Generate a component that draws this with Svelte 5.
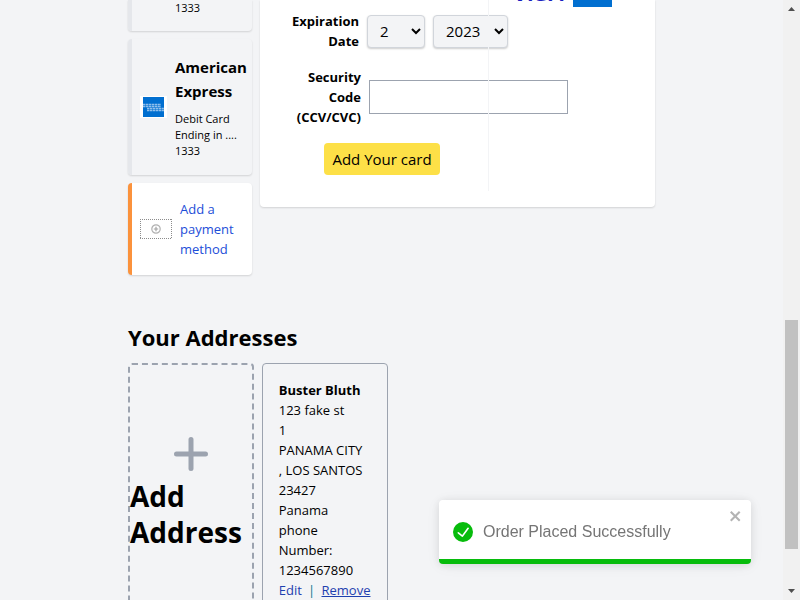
<script>
  let month = $state('2');
  let year = $state('2023');
  let code = $state('');
  let toastOpen = $state(true);
  const addressLines = [
    '123 fake st',
    '1',
    'PANAMA CITY',
    ', LOS SANTOS',
    '23427',
    'Panama',
    'phone',
    'Number:',
    '1234567890'
  ];
</script>

<div class="page">
  <main>
    <section class="wallet">
      <div class="cards">
        <article class="card">
          <div class="details"><p>1333</p></div>
        </article>
        <article class="card">
          <svg class="amex" viewBox="0 0 27 22" aria-hidden="true">
            <rect width="27" height="22" fill="#fff" />
            <rect x="3" y="1" width="21" height="20" fill="#016fd0" />
            <path d="M3 8.5h18M3 10.5h18" stroke="#8fbfec" stroke-width="1.4" stroke-dasharray="2.4 .5" />
            <path d="M7 12.5h17M7 14.5h17" stroke="#8fbfec" stroke-width="1.4" stroke-dasharray="2.4 .5" />
          </svg>
          <div class="details">
            <h3>American Express</h3>
            <p>Debit Card</p>
            <p>Ending in ....</p>
            <p>1333</p>
          </div>
        </article>
        <a class="card add" href="#payment">
          <svg class="slot" viewBox="0 0 32 20" aria-hidden="true">
            <path d="M0 .5h32M0 19.5h32M.5 0v20M31.5 0v20" fill="none" stroke="#8c8c8c" stroke-dasharray="1 1" />
            <circle cx="16" cy="10" r="4.2" fill="none" stroke="#b0b0b0" stroke-width="1.2" />
            <path d="M13.8 10h4.4M16 7.8v4.4" stroke="#a3a3a3" stroke-width="1.2" />
          </svg>
          <span>Add a payment method</span>
        </a>
      </div>

      <form class="panel" id="payment" onsubmit={(e) => e.preventDefault()}>
        <div class="brands">
          <span class="visa">VISA</span>
          <span class="blue"></span>
        </div>
        <div class="row">
          <label class="short" for="month">Expiration Date</label>
          <select id="month" class="month" bind:value={month}>
            <option>2</option>
          </select>
          <select class="year" aria-label="Year" bind:value={year}>
            <option>2023</option>
          </select>
        </div>
        <div class="row">
          <label class="long" for="code">Security Code (CCV/CVC)</label>
          <input id="code" type="text" bind:value={code} />
        </div>
        <button class="submit" type="submit">Add Your card</button>
        <div class="divider"></div>
      </form>
    </section>

    <h2>Your Addresses</h2>
    <section class="addresses">
      <a class="new" href="#address">
        <svg viewBox="0 0 48 48" aria-hidden="true">
          <path d="M24 9.5v29M9.5 24h29" stroke="#9ca3af" stroke-width="5" stroke-linecap="round" />
        </svg>
        <span>Add Address</span>
      </a>
      <address>
        <strong>Buster Bluth</strong>
        {#each addressLines as line}
          <span>{line}</span>
        {/each}
        <div class="actions">
          <a href="#edit">Edit</a><i>|</i><a class="remove" href="#remove">Remove</a>
        </div>
      </address>
    </section>
  </main>

  <div class="scrollbar" aria-hidden="true">
    <svg viewBox="0 0 7 4"><path d="M0 4L3.5 0L7 4z" fill="#505050" /></svg>
    <div class="thumb"></div>
    <svg viewBox="0 0 7 4"><path d="M0 0L3.5 4L7 0z" fill="#505050" /></svg>
  </div>

  {#if toastOpen}
    <div class="toast" role="alert">
      <svg class="check" viewBox="0 0 24 24" aria-hidden="true">
        <path fill="#07bc0c" d="M12 0a12 12 0 1012 12A12.014 12.014 0 0012 0zm6.927 8.2l-6.845 9.289a1.011 1.011 0 01-1.43.188l-4.888-3.908a1 1 0 111.25-1.562l4.076 3.261 6.227-8.451a1 1 0 111.61 1.183z" />
      </svg>
      <span>Order Placed Successfully</span>
      <button class="close" type="button" aria-label="close" onclick={() => (toastOpen = false)}>
        <svg viewBox="0 0 14 16" aria-hidden="true">
          <path fill-rule="evenodd" d="M7.71 8.23l3.75 3.75-1.48 1.48-3.75-3.75-3.75 3.75L1 11.98l3.75-3.75L1 4.48 2.48 3l3.75 3.75L9.98 3l1.48 1.48-3.75 3.75z" />
        </svg>
      </button>
    </div>
  {/if}
</div>

<style>
  :global(body) {
    margin: 0;
  }
  .page,
  .page * {
    box-sizing: border-box;
  }
  .page {
    display: flex;
    height: 100vh;
    overflow: hidden;
    background: #f3f4f6;
    color: #000;
    font: 13px/20px 'Segoe UI', 'Open Sans', 'Noto Sans', sans-serif;
  }
  h2,
  h3,
  p {
    margin: 0;
  }
  a {
    color: #1e40af;
    text-decoration: none;
  }
  main {
    flex: 1;
    padding: 0 128px;
  }
  .wallet {
    display: grid;
    grid-template-columns: 124px 1fr;
    gap: 8px;
    align-items: start;
  }
  .cards {
    display: flex;
    flex-direction: column;
    gap: 8px;
  }
  .card {
    display: flex;
    align-items: center;
    gap: 8px;
    padding: 16px 0 16px 8px;
    border-left: 4px solid #e5e7eb;
    border-radius: 4px;
    box-shadow: 0 1px 2px rgba(0, 0, 0, 0.14);
  }
  .card:first-child {
    padding: 0 0 16px 43px;
    border-radius: 0 0 4px 4px;
  }
  .details p {
    font-size: 11px;
    line-height: 16px;
  }
  .card:first-child p {
    line-height: 15px;
  }
  h3 {
    margin-bottom: 8px;
    font-size: 15px;
    line-height: 24px;
  }
  .amex {
    flex: none;
    width: 27px;
    height: 22px;
  }
  .slot {
    flex: none;
    width: 32px;
    height: 20px;
  }
  .add {
    padding-right: 8px;
    border-left-color: #fb923c;
    background: #fff;
    color: #1d4ed8;
  }
  .panel {
    position: relative;
    padding: 0 32px 32px;
    border-radius: 0 0 4px 4px;
    background: #fff;
    box-shadow: 0 1px 2px rgba(0, 0, 0, 0.14);
  }
  .brands {
    display: flex;
    gap: 8px;
    align-items: flex-start;
    height: 7px;
    margin: 0 11px 4px 0;
    overflow: hidden;
    justify-content: flex-end;
  }
  .visa {
    margin-top: -18px;
    color: #1a1fc0;
    font: italic bold 22px/24px 'Liberation Sans', sans-serif;
  }
  .blue {
    width: 39px;
    height: 7px;
    background: #016fd0;
  }
  .row {
    display: flex;
    align-items: center;
    gap: 8px;
    margin-bottom: 16px;
  }
  label {
    flex: none;
    font-weight: 700;
    text-align: right;
  }
  .short {
    width: 67px;
  }
  .long {
    width: 69px;
  }
  select {
    height: 33px;
    padding: 0 0 0 8px;
    border: 1px solid #d1d5db;
    border-radius: 4px;
    background-color: #f3f4f6;
    box-shadow: 0 1px 2px rgba(0, 0, 0, 0.2);
    color: #000;
    font: inherit;
    font-size: 15px;
  }
  .month {
    width: 58px;
  }
  .year {
    width: 75px;
  }
  input {
    width: 199px;
    height: 34px;
    padding: 0 8px;
    border: 1px solid #9ca3af;
    background: #fff;
    font: inherit;
  }
  .submit {
    display: block;
    width: 116px;
    height: 32px;
    margin-left: 32px;
    padding: 0 8px;
    border: 0;
    border-radius: 4px;
    background: #fde047;
    color: #000;
    font: inherit;
    font-size: 15px;
  }
  .divider {
    position: absolute;
    top: 0;
    bottom: 16px;
    left: 228px;
    width: 1px;
    background: #f3f4f6;
  }
  h2 {
    margin: 46px 0 10px;
    font-size: 22px;
    line-height: 32px;
  }
  .addresses {
    display: grid;
    grid-template-columns: repeat(4, minmax(0, 1fr));
    gap: 8px;
  }
  .new {
    display: flex;
    flex-direction: column;
    align-items: center;
    justify-content: center;
    border: 2px dashed #9ca3af;
    border-radius: 4px;
    color: #000;
    font-size: 28px;
    font-weight: 700;
    line-height: 36px;
  }
  .new svg {
    width: 48px;
    height: 48px;
  }
  .new span {
    width: 100%;
  }
  address {
    display: flex;
    flex-direction: column;
    padding: 16px;
    border: 1px solid #9ca3af;
    border-radius: 4px;
    font-style: normal;
    white-space: nowrap;
  }
  .actions {
    display: flex;
    justify-content: space-between;
  }
  .actions i {
    color: #0e7490;
    font-style: normal;
  }
  .remove {
    text-decoration: underline;
  }
  .scrollbar {
    display: flex;
    flex: none;
    flex-direction: column;
    align-items: center;
    justify-content: space-between;
    width: 17px;
    padding: 7px 0;
    background: #f1f1f1;
  }
  .scrollbar svg {
    width: 7px;
    height: 4px;
  }
  .thumb {
    width: 13px;
    height: 39%;
    margin: auto 0 40px;
    background: #c1c1c1;
  }
  .toast {
    position: fixed;
    right: 49px;
    bottom: 36px;
    display: flex;
    align-items: center;
    gap: 10px;
    width: 312px;
    height: 64px;
    padding: 5px 14px 0;
    border-bottom: 5px solid #07bc0c;
    border-radius: 4px;
    background: #fff;
    box-shadow: 0 1px 10px rgba(0, 0, 0, 0.1), 0 2px 15px rgba(0, 0, 0, 0.05);
    color: #757575;
    font: 16px/24px 'Liberation Sans', Arial, sans-serif;
  }
  .check {
    width: 20px;
    height: 20px;
  }
  .close {
    position: absolute;
    top: 8px;
    right: 8px;
    display: flex;
    padding: 0;
    border: 0;
    background: none;
    fill: #b3b3b3;
  }
  .close svg {
    width: 14px;
    height: 16px;
  }
</style>
